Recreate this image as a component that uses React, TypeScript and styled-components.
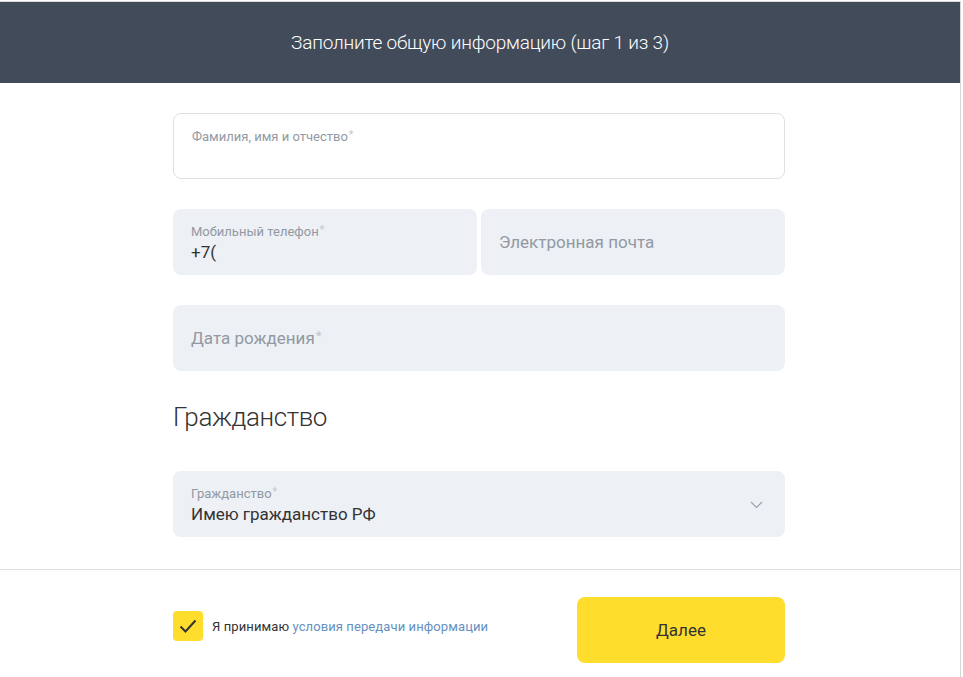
import styled, { createGlobalStyle } from "styled-components";

const GlobalStyle = createGlobalStyle`
    html, body {
        margin: 0;
        padding: 0;
        background: #ffffff;
        font-family: Roboto, "Liberation Sans", Arial, sans-serif;
        color: #333333;
    }
    * {
        box-sizing: border-box;
    }
`;

type FieldProps = {
    label?: string;
    value?: string;
    placeholder?: string;
    required?: boolean;
    outlined?: boolean;
    withChevron?: boolean;
};

function Field(props: FieldProps) {
    const { label, value, placeholder, required, outlined, withChevron } = props;
    const star = required ? <Star>*</Star> : null;

    if (placeholder) {
        return (
            <FieldBox $outlined={outlined} $centered>
                <Placeholder>{placeholder}{star}</Placeholder>
            </FieldBox>
        );
    }

    return (
        <FieldBox $outlined={outlined}>
            <FieldLabel>{label}{star}</FieldLabel>
            {value && <FieldValue>{value}</FieldValue>}
            {withChevron && (
                <Chevron width="13" height="8" viewBox="0 0 13 8">
                    <path d="M1 1l5.5 5.5L12 1" fill="none" stroke="#9aa0a8" strokeWidth="1.1" />
                </Chevron>
            )}
        </FieldBox>
    );
}

export default function App() {
    return (
        <>
            <GlobalStyle />
            <Card>
                <Header>Заполните общую информацию (шаг 1 из 3)</Header>

                <Form>
                    <Field outlined required label="Фамилия, имя и отчество" />

                    <Row>
                        <Field required label="Мобильный телефон" value="+7(" />
                        <Field placeholder="Электронная почта" />
                    </Row>

                    <Field required placeholder="Дата рождения" />

                    <SectionTitle>Гражданство</SectionTitle>

                    <Field required label="Гражданство" value="Имею гражданство РФ" withChevron />
                </Form>

                <Footer>
                    <Agreement>
                        <CheckBox>
                            <svg width="18" height="14" viewBox="0 0 18 14">
                                <path d="M1.5 7.5l5 5L16.5 1.5" fill="none" stroke="#333" strokeWidth="2" />
                            </svg>
                        </CheckBox>
                        <AgreementText>
                            Я принимаю <a href="#">условия передачи информации</a>
                        </AgreementText>
                    </Agreement>
                    <NextButton>Далее</NextButton>
                </Footer>
            </Card>
        </>
    );
}

const Card = styled.div`
    width: 961px;
    height: 677px;
    margin-top: 1px;
    border-top: 1px solid #dcdcdc;
    border-right: 1px solid #d6d6d6;
    background: #ffffff;
    overflow: hidden;
`;

const Header = styled.div`
    height: 81px;
    background: #424b5a;
    color: #ffffff;
    display: flex;
    align-items: center;
    justify-content: center;
    font-size: 19px;
    font-weight: 300;
    letter-spacing: -0.2px;
`;

const Form = styled.div`
    width: 612px;
    margin-left: 173px;
    padding: 30px 0 32px;
    display: flex;
    flex-direction: column;
    gap: 30px;
`;

const Row = styled.div`
    display: grid;
    grid-template-columns: 1fr 1fr;
    gap: 4px;
`;

const FieldBox = styled.div<{ $outlined?: boolean; $centered?: boolean }>`
    position: relative;
    height: 66px;
    border-radius: 8px;
    padding: ${(p) => (p.$centered ? "0 18px" : "15px 18px 0")};
    background: ${(p) => (p.$outlined ? "#ffffff" : "#edf0f5")};
    border: ${(p) => (p.$outlined ? "1px solid #dde0e4" : "none")};
    display: flex;
    flex-direction: column;
    justify-content: ${(p) => (p.$centered ? "center" : "flex-start")};
`;

const FieldLabel = styled.div`
    font-size: 13px;
    line-height: 16px;
    color: #9299a2;
`;

const Star = styled.span`
    position: relative;
    top: -0.3em;
    color: #c2c7cd;
    font-size: 0.8em;
    line-height: 0;
    margin-left: 1px;
`;

const FieldValue = styled.div`
    margin-top: 1px;
    font-size: 17px;
    line-height: 22px;
    color: #333333;
`;

const Placeholder = styled.div`
    font-size: 17px;
    line-height: 22px;
    color: #9299a2;
`;

const Chevron = styled.svg`
    position: absolute;
    right: 22px;
    top: 30px;
`;

const SectionTitle = styled.h2`
    margin: 0 0 8px;
    height: 32px;
    font-size: 26px;
    line-height: 32px;
    font-weight: 300;
    color: #333333;
    letter-spacing: -0.4px;
`;

const Footer = styled.div`
    border-top: 1px solid #e0e0e0;
    padding: 27px 175px 0 173px;
    display: flex;
    align-items: center;
    justify-content: space-between;
`;

const Agreement = styled.div`
    display: flex;
    align-items: center;
    gap: 9px;
    margin-top: -8px;
`;

const CheckBox = styled.div`
    width: 30px;
    height: 30px;
    border-radius: 4px;
    background: #ffdd2d;
    display: flex;
    align-items: center;
    justify-content: center;
`;

const AgreementText = styled.div`
    font-size: 13px;
    color: #333333;
    letter-spacing: 0.1px;

    a {
        color: #6590c0;
        text-decoration: none;
    }
`;

const NextButton = styled.button`
    width: 208px;
    height: 66px;
    border: none;
    border-radius: 8px;
    background: #ffdd2d;
    color: #333333;
    font-family: Roboto, "Liberation Sans", Arial, sans-serif;
    font-size: 17px;
    cursor: pointer;
`;
